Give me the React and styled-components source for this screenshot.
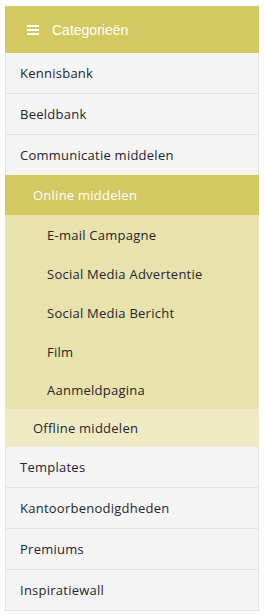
import React from 'react';
import styled, { createGlobalStyle } from 'styled-components';

const GlobalStyle = createGlobalStyle`
  html, body {
    margin: 0;
    padding: 0;
    background: #ffffff;
  }
  body {
    font-family: 'Open Sans', 'DejaVu Sans', sans-serif;
  }
`;

const Page = styled.div`
  padding: 6px 6px 0 5px;
`;

const Panel = styled.nav`
  width: 254px;
  display: flex;
  flex-direction: column;
`;

const Header = styled.div`
  height: 47px;
  background: #d4c860;
  display: flex;
  align-items: center;
  padding-left: 22px;
  gap: 13px;
  color: #ffffff;
  font-family: 'Liberation Sans', Arial, sans-serif;
  font-size: 14px;
`;

const Burger = styled.span`
  display: flex;
  flex-direction: column;
  gap: 2px;
  width: 12px;
  span {
    height: 2px;
    background: #ffffff;
  }
`;

const List = styled.ul`
  list-style: none;
  margin: 0;
  padding: 0;
  border-left: 1px solid #e4e4e4;
  border-right: 1px solid #e4e4e4;
`;

const tones = {
  top: { bg: '#f4f4f4', color: '#25252e' },
  active: { bg: '#d4c860', color: '#ffffff' },
  sub: { bg: '#e8e2ad', color: '#25252e' },
  sibling: { bg: '#efeac4', color: '#25252e' },
};

const Item = styled.li`
  display: flex;
  align-items: center;
  height: ${(p) => p.$h || 40}px;
  padding-left: ${(p) => p.$indent}px;
  background: ${(p) => tones[p.$tone].bg};
  color: ${(p) => tones[p.$tone].color};
  font-size: 13px;
  letter-spacing: 0.25px;
  border-bottom: ${(p) => (p.$border ? '1px solid #e2e2e2' : 'none')};
  margin-left: ${(p) => (p.$tone === 'top' ? 0 : -1)}px;
  margin-right: ${(p) => (p.$tone === 'top' ? 0 : -1)}px;
`;

const SubGroup = styled.div`
  padding: 0;
`;

export default function App() {
  return (
    <>
      <GlobalStyle />
      <Page>
        <Panel>
          <Header>
            <Burger>
              <span />
              <span />
              <span />
            </Burger>
            Categorieën
          </Header>
          <List>
            <Item $tone="top" $indent={14} $border>Kennisbank</Item>
            <Item $tone="top" $indent={14} $border>Beeldbank</Item>
            <Item $tone="top" $indent={14}>Communicatie middelen</Item>
            <Item $tone="active" $indent={28}>Online middelen</Item>
            <SubGroup>
              <Item $tone="sub" $indent={42} $h={39}>E-mail Campagne</Item>
              <Item $tone="sub" $indent={42} $h={39}>Social Media Advertentie</Item>
              <Item $tone="sub" $indent={42} $h={39}>Social Media Bericht</Item>
              <Item $tone="sub" $indent={42} $h={39}>Film</Item>
              <Item $tone="sub" $indent={42} $h={38}>Aanmeldpagina</Item>
            </SubGroup>
            <Item $tone="sibling" $indent={28} $h={38}>Offline middelen</Item>
            <Item $tone="top" $indent={14} $border>Templates</Item>
            <Item $tone="top" $indent={14} $border>Kantoorbenodigdheden</Item>
            <Item $tone="top" $indent={14} $border>Premiums</Item>
            <Item $tone="top" $indent={14} $border>Inspiratiewall</Item>
          </List>
        </Panel>
      </Page>
    </>
  );
}
